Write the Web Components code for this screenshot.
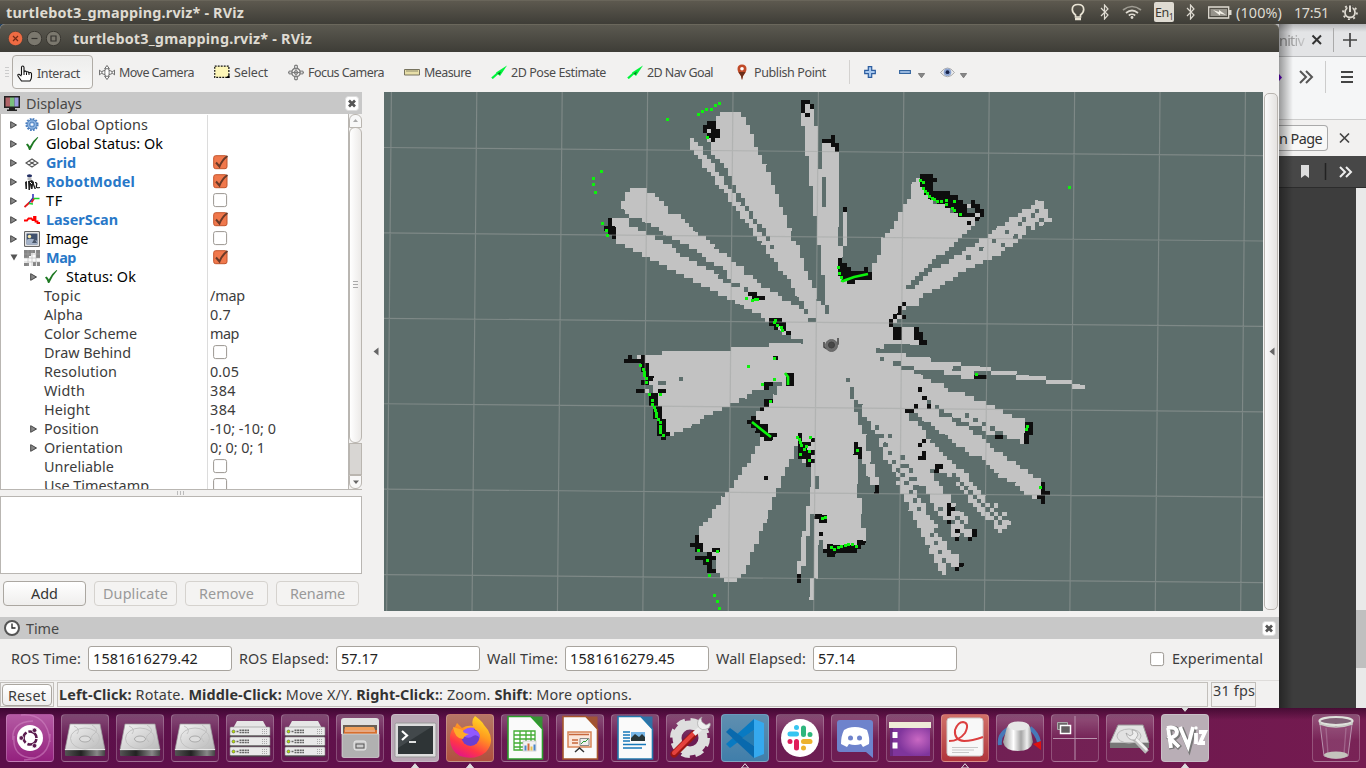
<!DOCTYPE html>
<html lang="en">
<head>
<meta charset="utf-8">
<title>turtlebot3_gmapping.rviz* - RViz</title>
<style>
html,body{margin:0;height:768px;overflow:hidden}
body{font:14.4px/19px "Noto Sans","Open Sans",sans-serif;color:#3c3c3c;background:#4a1140}
</style>
</head>
<body>
<desk-top></desk-top>
<script>
const svg=(w,h,body,vb)=>`<svg width="${w}" height="${h}" viewBox="${vb||`0 0 ${w} ${h}`}" style="display:block">${body}</svg>`;
const disk='<defs><linearGradient id="m" x2="1" y2="1"><stop stop-color="#f4f4f4"/><stop offset="1" stop-color="#b9b9b9"/></linearGradient><linearGradient id="k"><stop stop-color="#555"/><stop offset=".4" stop-color="#222"/><stop offset=".8" stop-color="#888"/><stop offset="1" stop-color="#444"/></linearGradient></defs><path d="M9 10h30l5 26H4z" fill="url(#m)" stroke="#999" stroke-width=".7"/><path d="M4 36h40v5q0 1-1 1H5q-1 0-1-1z" fill="url(#k)"/><path d="M4 35.6h40" stroke="#eee"/><ellipse cx="24" cy="24.5" rx="14.500" ry="10.500" fill="none" stroke="#c2c2c2"/><ellipse cx="24" cy="25" rx="5.500" ry="3" fill="#ddd" stroke="#aaa"/><path d="M13 12q7 3 3 8m15-9q8 5 2 9-5 3 0 8" fill="none" stroke="#bbb" stroke-width=".8"/>';
let server='<path d="M11 7h26l6 11H5z" fill="#e6e6e6"/>';
for(const y of [13,23,33])server+=`<rect x="4" y="${y}" width="40" height="9" rx="1" fill="#e9e9e9" stroke="#8b8b8b" stroke-width=".6"/><path d="M4 ${y+9}h40" stroke="#333" stroke-width="1.200"/><circle cx="7.500" cy="${y+4.500}" r="1.500" fill="#b5e000" stroke="#555" stroke-width=".6"/><path d="M10.500 ${y+4.500}h2M13.500 ${y+3.300}h9.500M13.500 ${y+5.500}h9.500" stroke="#666" stroke-width="1.400" stroke-dasharray="2 .6"/><path d="M36 ${y+2.500}h6M36 ${y+4.500}h6M36 ${y+6.500}h6" stroke="#aaa" stroke-dasharray="1 1"/>`;
const doc=(c,inner)=>`<path d="M7 2.500h23L41.500 15v30H7z" fill="#fafafa" stroke="${c}" stroke-width="1.600"/><path d="M29 2.500h12.500V15z" fill="${c}" opacity=".85"/>${inner}`;
let sheet='<rect x="13" y="17" width="21" height="19" fill="#fff"/><path d="M13 17h21v19H13zM13 21h21M13 25h21M13 29h21M13 33h21M19 17v19M25 17v19M30 17v19" fill="none" stroke="#44ad35" stroke-width="1.300"/><rect x="22" y="27" width="13" height="10" fill="#f1f1f1" stroke="#bbb" stroke-width=".6"/><path d="M24.500 36.500v-5" stroke="#4a86c8" stroke-width="2"/><path d="M27.500 36.500v-7" stroke="#d26b3a" stroke-width="2"/><path d="M30.500 36.500v-4" stroke="#e6c352" stroke-width="2"/><path d="M33.500 36.500v-6" stroke="#4a86c8" stroke-width="2"/>';
const check='<path d="M1 8.500l1.500-1q1.800 1.500 2.300 3Q7.500 4.500 12.500 1l.8.400Q8 7 5.300 14H4Q3 10.500 1 8.500z" fill="#1f7a24"/>';
const arrowg='<path d="M1 13.300L7 8" stroke="#00f53c" stroke-width="2.200"/><path d="M5 7.500L16 .5 9 11z" fill="#00f53c"/><path d="M6.500 8.500l3.500-2-1.500 3.500z" fill="#087a22"/>';
const bt='<path d="M2 4l7 7-3.500 4V1L9 5l-7 7" fill="none" stroke="#dfdbd2" stroke-width="1.200"/>';
const ICONS={
hand:svg(16,17,'<path d="M4.500 10V2.500q0-1.500 1.200-1.500T7 2.500V8 6.500q2-1 2.500.5 1.700-.8 2.300.7 2-.8 2.700 1V12q0 2-1.500 4H4.500Q3 14 1 11q-.6-2 1-1.700L4.500 11" fill="#fff" stroke="#111" stroke-width="1.100"/><path d="M7 8v2M9.500 7.500V10M12 8v2" stroke="#111"/>'),
move:svg(16,17,'<g fill="#fff" stroke="#555" stroke-width=".9"><ellipse cx="8.500" cy="8.500" rx="6" ry="2.300"/><ellipse cx="8.500" cy="8.500" rx="2.300" ry="6"/><path d="M8.500 1L6 4.500h5zM8.500 16L6 12.500h5zM.5 6v5l3-2.500zM16.500 6v5l-3-2.500z"/></g>','0 0 17 17'),
select:svg(16,14,'<path d="M.8.800h15v12h-15z" fill="#fdf6b8" stroke="#111" stroke-width="1.300" stroke-dasharray="2 1.200"/><path d="M16.500 9.500v4h-4z"/>','0 0 17 14'),
focus:svg(16,17,'<g fill="none" stroke="#777"><circle cx="8.500" cy="8.500" r="4.500" stroke-width="1.400"/><circle cx="8.500" cy="8.500" r="2"/><path d="M8.500 0v17M0 8.500h17"/><path d="M7 1h3v3H7zM7 13h3v3H7zM1 7h3v3H1zM13 7h3v3h-3z" fill="#ddd"/></g>','0 0 17 17'),
measure:svg(16,7,'<path d="M.5.500h15v5.500h-15z" fill="#e8dfa8" stroke="#77735e"/><path d="M3 1v2M5 1v2M7 1v2M9 1v2M11 1v2M13 1v2" stroke="#77735e" stroke-width=".8"/>'),
arrowg:svg(16,14,arrowg),
pin:svg(13,16,'<path d="M5 .5q4.500.2 4.500 4.500Q9.500 8 6 12l-1 4-1-4Q.5 8 .5 5 .5.700 5 .5z" fill="#c04a28"/><path d="M1.500 8h7L6 12 5 16 4 12z" fill="#6b2f1a"/><circle cx="5" cy="4.800" r="1.800" fill="#fff"/>'),
plus:svg(12,12,'<path d="M4.300.7h3.400v3.600h3.600v3.400H7.700v3.600H4.300V7.700H.7V4.300h3.600z" fill="#a8c8ee" stroke="#2c5d9f" stroke-width="1.200"/>'),
minus:svg(12,4,'<path d="M.6.600h10.800v2.800H.6z" fill="#b8d2f2" stroke="#34659f" stroke-width="1.100"/>'),
eye:svg(15,11,'<path d="M.5 5.500Q7.500-3.500 14.500 5.500 7.500 14 .5 5.500z" fill="#eee" stroke="#aaa"/><circle cx="7.500" cy="5.200" r="3.800" fill="#8ba3d0"/><circle cx="7.500" cy="5.200" r="1.900" fill="#18234a"/>'),
down:svg(7,5,'<path d="M.3.500h6.400L3.500 4.800z" fill="#888" stroke="#666" stroke-width=".7"/>'),
monitor:svg(16,17,'<path d="M0 1h16v12H0z" fill="#222"/><path d="M1.500 2.500h4.500v9H1.500z" fill="#b06468"/><path d="M6 2.500h4.500v9H6z" fill="#7abf7d"/><path d="M10.500 2.500h4v9h-4z" fill="#9a9ade"/><path d="M5 13h6v1.500h2V16H3v-1.500h2z" fill="#222"/>'),
clock:svg(16,16,'<circle cx="8" cy="8" r="7" fill="#fff" stroke="#555" stroke-width="2"/><path d="M8 3.500V8h3.500" fill="none" stroke="#222" stroke-width="1.300"/>'),
gear:svg(14,15,'<circle cx="7" cy="7.500" r="5.700" fill="none" stroke="#4a7fc0" stroke-width="1.800" stroke-dasharray="1.800 1.180"/><circle cx="7" cy="7.500" r="4.800" fill="#8cb4e2" stroke="#3f74b4" stroke-width=".8"/><circle cx="7" cy="7.500" r="2.400" fill="#a9c8ee" stroke="#3f74b4" stroke-width=".8"/><circle cx="7" cy="7.500" r="1" fill="#fff"/>'),
check:svg(14,15,check),
grid:svg(14,10,'<path d="M1 5l6-4 6 4-6 4zM4 3l6 4M10 3L4 7" fill="none" stroke="#555" stroke-width="1.200"/>'),
robot:svg(16,16,'<ellipse cx="5.500" cy="1.800" rx="2.600" ry="1.600" fill="#232f63"/><path d="M3.500 3.500h4v2.500h-4z" fill="#bbb"/><path d="M1 8l2-1v8H1.500zM4 7l4-1 2 2v2l2 5h-1.500L9 11l-.5 4H7L6.500 11 6 16H4.500z" fill="#222"/><path d="M6 8l2 2" stroke="#fff"/><path d="M11 8.500q2.500 0 1.500 3t3.500 2" fill="none" stroke="#111" stroke-width="1.200"/>'),
tf:svg(16,15,'<path d="M9 1v4l-4 5" stroke="#2a2ab8" fill="none" stroke-width="1.500"/><path d="M.5 14L5.500 9.500M7.500 9.500l2.500-4" stroke="#e31b1b" fill="none" stroke-width="1.800"/><path d="M9.500 5.500h6M5 10.500l4 .5" stroke="#19d42c" fill="none" stroke-width="1.500"/>'),
laser:svg(16,10,'<path d="M0 5.500h3l1.500-2h3l1 1.500h1.500V2h1.500v4.500h2V8H16" fill="none" stroke="#f00" stroke-width="1.800"/>'),
image:svg(16,16,'<path d="M.6.600h14.800v14.800H.6z" fill="#f4f4f4" stroke="#555"/><path d="M2.500 2.500h11v11h-11z" fill="#40516e"/><path d="M2.500 9q4-3 11 1v3.500h-11z" fill="#a3b2c8"/><circle cx="5.500" cy="5.500" r="1.700" fill="#f7e9aa"/><path d="M8 12l2.500-4.500L13 12z" fill="#4a5668"/>'),
map:svg(16,16,'<path d="M0 0h16v16H0z" fill="#fafafa"/><path d="M0 0h5v8H0zM5 0h6v3H5zM5 3h2v3H5zM12 0h4v8h-4zM0 13h5v3H0zM9 12h3v4H9zM13 12h3v4h-3z" fill="#858585"/><path d="M0 4h16M0 8h16M0 12h16M4 0v16M8 0v16M12 0v16" stroke="#aaa" stroke-width=".5"/>'),
bulb:svg(14,18,'<path d="M4.500 12Q1.300 9.500 1.300 6.500q0-5 5.700-5t5.700 5q0 3-3.200 5.500v2h-5z" fill="none" stroke="#e8e3d4" stroke-width="1.700"/><path d="M4 16h6" stroke="#e8e3d4" stroke-width="2.500"/>'),
bt:svg(11,16,bt),
wifi:svg(20,14,'<g fill="none" stroke="#dfdbd2" stroke-width="1.700"><path d="M1 5q9-7 18 0" opacity=".55"/><path d="M4 8q6-5 12 0"/><path d="M6.800 10.500q3.200-2.500 6.400 0"/></g><circle cx="10" cy="12.500" r="1.400" fill="#dfdbd2"/>'),
battery:svg(24,13,'<path d="M.7 1h20v11H.7z" fill="none" stroke="#dfdbd2" stroke-width="1.300"/><path d="M2.500 3h16.500v7H2.500z" fill="#96938b"/><path d="M21 4h2.500v5H21z" fill="#dfdbd2"/><path d="M5 4l6 2V4l7 5-6-1.500V9.500z" fill="#f2efe6"/>'),
power:svg(16,16,'<circle cx="8" cy="8.500" r="5" fill="none" stroke="#dfdbd2" stroke-width="1.800"/><circle cx="8" cy="8.500" r="6.900" fill="none" stroke="#dfdbd2" stroke-width="1.900" stroke-dasharray="2 3.420"/><path d="M8 0v8" stroke="#4e4b44" stroke-width="5"/><path d="M8 1.500v6.500" stroke="#dfdbd2" stroke-width="2"/>'),
/* launcher icons, 48 units square */
ubuntu:svg(48,48,'<g fill="none" stroke="#d58dc7" opacity=".5" stroke-width="1.500"><path d="M15 1Q42-1 44 28M44 20q0 25-26 26M8 22Q6 44 28 44M7 26Q5 8 27 7"/></g><circle cx="24" cy="24" r="13" fill="#fff"/><circle cx="24" cy="24" r="6.500" fill="none" stroke="#5b1a4e" stroke-width="2.600" stroke-dasharray="11.600 2" stroke-dashoffset="-1"/><g fill="#5b1a4e" stroke="#fff" stroke-width=".7"><circle cx="15.300" cy="24" r="2.300"/><circle cx="28.500" cy="16.300" r="2.300"/><circle cx="28.500" cy="31.700" r="2.300"/></g>'),
disk:svg(48,48,disk),server:svg(48,48,server),
files:svg(48,48,'<path d="M5 7q0-3 3-3h32q3 0 3 3v13H5z" fill="#e0e0e0"/><path d="M7 11h34v10H7z" fill="#6b6055"/><path d="M9 13h29l2 5H8z" fill="#f1a05b"/><path d="M8 16h33v4H8z" fill="#d66f2f"/><path d="M9 17h30" stroke="#fff" stroke-width=".8"/><path d="M6 20h37v22q0 1.500-2 1.500H8q-2 0-2-1.500z" fill="#b1b1b1" stroke="#ddd" stroke-width=".7"/><rect x="18" y="27" width="12" height="9" rx="2" fill="#ccc" stroke="#e8e8e8"/><rect x="20" y="30" width="8" height="4" fill="none" stroke="#555"/>'),
term:svg(48,48,'<rect x="4" y="9" width="41" height="34" rx="1.500" fill="#ddd" stroke="#999"/><path d="M7 12h35v28H7z" fill="#2e3436"/><path d="M7 12h35L7 34z" fill="#50575a" opacity=".6"/><path d="M11 17l5 4.500-5 4.500" fill="none" stroke="#fff" stroke-width="2.200"/><path d="M18 28h7" stroke="#fff" stroke-width="1.700"/>'),
firefox:svg(48,48,'<defs><linearGradient id="f" x1=".8" y1="0" x2=".3" y2="1"><stop stop-color="#ffe226"/><stop offset=".4" stop-color="#ff9a1f"/><stop offset=".75" stop-color="#ff3647"/><stop offset="1" stop-color="#e31587"/></linearGradient></defs><path d="M29 2q8 6 9 9l4 5q7 12-2 22-11 9-26 4Q3 36 4 22q1-7 5-9l2-4 5 5q5-3 11-2-2-6 2-10z" fill="url(#f)"/><circle cx="24.500" cy="23" r="9" fill="#6b3ed0"/><path d="M17 17q5-5 12-3-2 1-1 2 6 1 6 8-3-4-7-2-3 3-8 1 0-4-2-6z" fill="#9059ff"/><path d="M7 13l10 3q-1 3 6 4-5 2-6 5-8 0-10-12z" fill="#ffab28"/>'),
calc:svg(48,48,doc('#2c9e2c',sheet)),
impress:svg(48,48,doc('#a6562c','<path d="M12 18h23v15H12z" fill="#fbe6da" stroke="#d88558" stroke-width="1.500"/><path d="M13 20.500h20M16 26h6M16 29h6" stroke="#c8683c" stroke-width="1.500"/><path d="M24 24.500h9v7h-9z" fill="#eee" stroke="#888"/><path d="M25 30l3-3 1 1 3-3" stroke="#2d9a38" fill="none"/><path d="M19 38l4.500-4 4.500 4" fill="none" stroke="#333" stroke-width="1.500"/>')),
writer:svg(48,48,doc('#2379ad','<path d="M12 18h7M12 21h7M12 24h7M12 27h7M12 30.500h23M12 34h19" stroke="#1778b9" stroke-width="1.500"/><path d="M20 18h14v9H20z" fill="#77b7e8"/><path d="M20 27v-3l4-4 4 3 3-3 3 3v4z" fill="#283638"/>')),
tools:svg(48,48,'<circle cx="24" cy="24" r="17" fill="none" stroke="#ddd" stroke-width="6" stroke-dasharray="8 5.350"/><circle cx="24" cy="24" r="13" fill="none" stroke="#dedede" stroke-width="9"/><path d="M8 40L28 20" stroke="#9b1714" stroke-width="7" stroke-linecap="round"/><path d="M8 39L27 20" stroke="#e5423d" stroke-width="4" stroke-linecap="round"/><path d="M28 20l8-7" stroke="#eee" stroke-width="4.500"/><path d="M36 3q-6 3-4 9 3 6 11 2 2-3 1-5l-4 2-4-3-1-3z" fill="#eee" stroke="#aaa" stroke-width=".7"/>'),
code:svg(48,48,'<path d="M33 5l10 4v31l-10 4z" fill="#35a9ef"/><path d="M33 5L5 30l4 4 24-18z" fill="#087ac2"/><path d="M5 18l4-4 24 18v12z" fill="#0969ad"/><path d="M33 16v16L21 24z" fill="#287baf"/>'),
slack:svg(48,48,'<circle cx="24" cy="24" r="19" fill="#fff"/><g stroke-width="5" stroke-linecap="round"><path d="M20.500 13.500v0M14 20h6.500" stroke="#36c5f0"/><path d="M27.500 14v6.500M34 20.500v0" stroke="#2eb67d"/><path d="M27.500 34v0M27.500 27.500H34" stroke="#ecb22e"/><path d="M20.500 27.500V34M14 27.500v0" stroke="#e01e5a"/></g>'),
discord:svg(48,48,'<path d="M9 6h30q3 0 3 3v35l-7-6H9q-3 0-3-3V9q0-3 3-3z" fill="#6e83cc"/><path d="M17 14q7-2 14 0l5 2q3 8 2 14l-6 3-2-3q-6 2-12 0l-2 3-6-3q0-8 3-14z" fill="#fff"/><circle cx="19.500" cy="24" r="2.500" fill="#6e83cc"/><circle cx="28.500" cy="24" r="2.500" fill="#6e83cc"/>'),
desk:svg(48,48,'<defs><radialGradient id="d" cx=".7" cy=".5"><stop stop-color="#c968c3"/><stop offset="1" stop-color="#7f359c"/></radialGradient></defs><path d="M4 9h40v33H4z" fill="url(#d)"/><path d="M3 8h42v6H3z" fill="#eeecd8"/><path d="M4 14h3v28H4z" fill="#6b2a82"/><path d="M6.500 18h5v6h-5zM6.500 28.500h5v6h-5z" fill="#fff"/>'),
pdf:svg(48,48,'<rect x="6" y="4" width="36" height="38" rx="3" fill="#f8f8f8" stroke="#ccc"/><path d="M8 27q10 0 16-8 5-10-2-11-5 0-8 8-1 10 9 11 8 0 19-4" fill="none" stroke="#dc3f3f" stroke-width="2"/><path d="M11 33.500h26M11 36h22M11 38.500h17" stroke="#bbb" stroke-width=".8"/>'),
knob:svg(48,48,'<defs><linearGradient id="n"><stop stop-color="#999"/><stop offset=".35" stop-color="#fff"/><stop offset=".6" stop-color="#a5a5a5"/><stop offset=".8" stop-color="#eee"/><stop offset="1" stop-color="#888"/></linearGradient></defs><path d="M4 31q-2-12 12-18M34 14q7 5 9 14" fill="none" stroke="#4779b8" stroke-width="4"/><path d="M37 30l8-3v9z" fill="#d11"/><path d="M11 13Q14 8 23 8t11 5l3 15q-2 9-15 9T7 28z" fill="url(#n)"/><ellipse cx="22.500" cy="12" rx="10.500" ry="4.500" fill="#e6e6e6"/>'),
spaces:svg(48,48,'<path d="M24 2v44M2 24.500h44" stroke="#b993ae"/><path d="M6.500 8.500h10v7h-10z" fill="#6b6668" stroke="#aaa"/><path d="M9.500 11.500h10v8h-10z" fill="#635d60" stroke="#fff" stroke-width="1.500"/>'),
disktool:svg(48,48,'<path d="M12 11h25l6 18H4z" fill="#e2e2e2" stroke="#999"/><path d="M4 29h39v5H4z" fill="#777"/><ellipse cx="23" cy="22" rx="12" ry="7" fill="none" stroke="#bbb"/><path d="M27 23l14 15" stroke="#bbb" stroke-width="5"/><path d="M28 23l13 13" stroke="#f2f2f2" stroke-width="2.500"/><path d="M20 19q2 8 9 7l3-5q-1-5-6-5l1 4-3 2z" fill="#ededed" stroke="#999" stroke-width=".7"/>'),
rviz:svg(48,48,'<g fill="none" stroke="#777" stroke-width="5.500" transform="translate(1 1)"><path d="M7 14l3 20M7 14q9-2 9 4 0 4-7 6l9 9M19 13l8 19 5-19"/></g><g fill="none" stroke="#fff" stroke-width="3.800"><path d="M7 14l3 20M6 14q9-2 10 4 0 4-7 6l9 9M19 13l8 19 5-19M35 19v11M38 18h6l-5 11h5"/></g><circle cx="35" cy="14" r="1.700" fill="#fff"/>'),
trash:svg(48,48,'<path d="M8 10l4 32q12 5 24 0l4-32" fill="#a86f95" fill-opacity=".3" stroke="#b892ad"/><path d="M14 14l2 26M34 14l-2 26" stroke="#b98dab" stroke-width="1.300" opacity=".5"/><ellipse cx="24" cy="7" rx="16.500" ry="4" fill="#826378" stroke="#dfe2dc" stroke-width="2.200"/><path d="M8 8v2q16 6 32 0V8" fill="none" stroke="#c9ccc6" stroke-width="1.500"/><ellipse cx="24" cy="41" rx="12" ry="3.500" fill="#c4c4bd"/>')
};

const pendingFits=[];
function define(name,css,html,after){
  customElements.define(name,class extends HTMLElement{
    connectedCallback(){
      if(this.shadowRoot)return;
      const root=this.attachShadow({mode:'open'});
      const t=document.createElement('template');
      t.innerHTML=`<style>*{box-sizing:border-box}${css}</style>`+(typeof html==='function'?html(this):html);
      root.append(t.content.cloneNode(true));
      if(after)after(this,root);
    }
  });
}
const a=(e,n,d='')=>e.getAttribute(n)??d;

/* A label whose tracking is adjusted to fill the width in "w" */
define('fit-text',':host{display:inline-block;white-space:pre}span{display:inline-block}','<span><slot></slot></span>',(e,r)=>pendingFits.push([e,r.querySelector('span')]));
define('ui-icon',':host{display:block;flex:none}',e=>ICONS[a(e,'name')]);

define('top-panel',`:host{display:flex;align-items:center;height:24px;background:linear-gradient(#5d594f,#3e3d37);color:#dfdbd2;padding:0 8px 1px 6px;border-top:1px solid #69655a}
b{flex:1}.kb{width:20px;height:20px;background:#dfdbd2;color:#3b3934;border-radius:2px;font-size:12.5px;padding-left:1px;display:flex;align-items:center}.kb sub{font-size:8px;margin-top:8px}
ui-icon[name=bulb]{margin-right:14px}ui-icon[name=wifi]{margin:0 12px 0 12px}.kb+ui-icon{margin:0 12px 0 11px}.time{margin:0 13px 0 12px}.pc{margin-left:4px}`,
`<b><fit-text w="238">turtlebot3_gmapping.rviz* - RViz</fit-text></b><ui-icon name="bulb"></ui-icon><ui-icon name="bt"></ui-icon><ui-icon name="wifi"></ui-icon><div class="kb"><fit-text w="14">En</fit-text><sub>1</sub></div><ui-icon name="bt"></ui-icon><ui-icon name="battery"></ui-icon><fit-text class="pc" w="46">(100%)</fit-text><fit-text class="time" w="35">17:51</fit-text><ui-icon name="power"></ui-icon>`);

define('title-bar',`:host{display:flex;align-items:center;height:28px;background:linear-gradient(#5b5950,#3e3d37);border-top:1px solid #6a675c;color:#dfdbd2;padding-left:8px;border-radius:5px 5px 0 0}
i{width:15px;height:15px;margin-right:4px;display:block}b{margin-left:8px}`,
`<i>${svg(15,15,'<circle cx="7.500" cy="7.500" r="7.200" fill="#ef6b43" stroke="#423e37" stroke-width=".7"/><path d="M5 5l5 5M10 5l-5 5" stroke="#722b17" stroke-width="1.200"/>')}</i><i>${svg(15,15,'<circle cx="7.500" cy="7.500" r="7.200" fill="#7b786e" stroke="#393731"/><path d="M4.500 7.500h6" stroke="#35332f" stroke-width="1.200"/>')}</i><i>${svg(15,15,'<circle cx="7.500" cy="7.500" r="7.200" fill="#7b786e" stroke="#393731"/><path d="M5 5h5v5H5z" fill="none" stroke="#35332f" stroke-width="1.200"/>')}</i><b><fit-text w="239">turtlebot3_gmapping.rviz* - RViz</fit-text></b>`);

define('tool-item',':host{display:flex;align-items:center;gap:4px;font-size:12.5px;color:#4c4c4c;flex:none}:host([active]){background:linear-gradient(#ededec,#f8f8f7);border:1px solid #b0aca6;border-radius:4px;height:34px;width:81px;padding:3px 0 0 4px;margin-top:-1px}',
e=>`<ui-icon name="${a(e,'icon')}"></ui-icon><fit-text w="${a(e,'w')}">${a(e,'label')}</fit-text>`);
const tools=[['hand','Interact',43,0],['move','Move Camera',75,6],['select','Select',34,20],['focus','Focus Camera',76,20],['measure','Measure',47,20],['arrowg','2D Pose Estimate',95,20],['arrowg','2D Nav Goal',66,21],['pin','Publish Point',72,24]];
define('tool-bar',`:host{display:flex;align-items:center;height:40px;background:#f2f1f0;padding-left:5px}
.grip{width:4px;height:10px;margin-right:3px;background:repeating-linear-gradient(#ccc 0 1px,transparent 1px 3px)}.sep{width:1px;height:24px;background:#d4d2d0;margin:0 14px 0 23px}
ui-icon[name=minus]{margin:0 7px 0 23px}ui-icon[name=eye]{margin:0 5px 0 15px}ui-icon[name=down]{margin-top:6px}`,
`<div class="grip"></div>${tools.map((t,i)=>`<tool-item icon="${t[0]}" label="${t[1]}" w="${t[2]}" ${i?'':'active'} style="margin-left:${t[3]}px"></tool-item>`).join('')}<div class="sep"></div><ui-icon name="plus"></ui-icon><ui-icon name="minus"></ui-icon><ui-icon name="down"></ui-icon><ui-icon name="eye"></ui-icon><ui-icon name="down"></ui-icon>`);

define('dock-header',':host{display:flex;align-items:center;height:22px;background:#c8c8c8;padding:0 3px 0 4px;flex:none}span{flex:1;margin-left:6px;color:#484848;padding-top:1px}',
e=>`<ui-icon name="${a(e,'icon')}"></ui-icon><span><fit-text w="${a(e,'w')}">${a(e,'label')}</fit-text></span>${svg(14,15,'<rect x=".5" y=".5" width="13" height="14" rx="3" fill="#fff" stroke="#ddd"/><path d="M4 4.500l6 6M10 4.500l-6 6" stroke="#555" stroke-width="2.700"/>')}`);

define('check-box',':host{display:block;width:16px;height:16px}',
e=>e.hasAttribute('on')?svg(16,16,'<rect x=".7" y="1.700" width="13.300" height="13" rx="2" fill="#f0784c" stroke="#c2542c"/><path d="M3 8.500l3.500 4Q9 6 14.500 2" fill="none" stroke="#6b3a28" stroke-width="2"/>'):svg(16,16,'<rect x=".6" y="1.600" width="13" height="13" rx="2" fill="#fff" stroke="#9b9791"/>'));
define('tree-row',`:host{display:flex;height:19px;align-items:center;flex:none}
.n{width:206px;display:flex;align-items:center;flex:none;height:19px}.t{width:7px;margin-left:9px;flex:none}.i{width:16px;margin:0 6px 0 7px;display:flex;justify-content:center}
.v{border-left:1px solid #dcdcdc;height:19px;padding-left:2px;flex:1}:host([kind=link]) .n{color:#2878c8;font-weight:bold}:host([kind=black]){color:#000}check-box{margin:1px 0 0 3px}
:host([depth="1"]) .t{margin-left:29px}:host([depth="1"]) .i{margin-left:6px;margin-right:7px}:host([depth="1"]) .plain{margin-left:7px}`,
e=>{const op=a(e,'open');return `<div class="n"><div class="t">${op===''?'':op=='1'?svg(8,7,'<path d="M.5.500h7L4 6.500z" fill="#555"/>'):svg(7,8,'<path d="M.7.700v6.600L6.500 4z" fill="#888" stroke="#444"/>')}</div>${a(e,'icon')?`<div class="i"><ui-icon name="${a(e,'icon')}"></ui-icon></div>`:''}<fit-text class="${a(e,'icon')?'':'plain'}" w="${a(e,'w')}">${a(e,'label')}</fit-text></div><div class="v">${a(e,'val')=='on'?'<check-box on></check-box>':a(e,'val')=='off'?'<check-box></check-box>':`<fit-text w="${a(e,'vw')}">${a(e,'val')}</fit-text>`}</div>`});

const rows=[['Global Options','gear',102,0,'','',0,0],['Global Status: Ok','check',117,0,'black','',0,0],['Grid','grid',30,0,'link','on',0,0],['RobotModel','robot',89,0,'link','on',0,0],['TF','tf',17,0,'black','off',0,0],['LaserScan','laser',72,0,'link','on',0,0],['Image','image',42,0,'black','off',0,0],['Map','map',30,0,'link','on',0,1],['Status: Ok','check',70,1,'black','',0,0],
['Topic','',37,1,'','/map',35],['Alpha','',39,1,'','0.7',21],['Color Scheme','',93,1,'','map',29],['Draw Behind','',87,1,'','off'],['Resolution','',73,1,'','0.05',29],['Width','',41,1,'','384',26],['Height','',46,1,'','384',26],['Position','',55,1,'','-10; -10; 0',66,0],['Orientation','',79,1,'','0; 0; 0; 1',55,0],['Unreliable','',70,1,'','off'],['Use Timestamp','',105,1,'','off']];
define('displays-panel',`:host{display:flex;flex-direction:column;width:362px;flex:none}
.tree{height:376px;display:flex;border:1px solid #b9b6b2;border-top:0;border-right:0;background:#fff;flex:none}.rows{flex:1;overflow:hidden;display:flex;flex-direction:column;padding-top:1px}
.sb{width:14px;background:#f2f1f0;border-left:1px solid #b9b6b2;display:flex;flex-direction:column;align-items:center}.sb div{border:1px solid #bab6b0;width:13px}.up{height:14px;border-radius:6px 6px 0 0;background:#f8f8f8;display:flex;justify-content:center;align-items:center}.th{height:316px;border-radius:6px;background:linear-gradient(90deg,#fff,#eceae8);display:flex;align-items:center;justify-content:center;margin-top:-1px}.tr{flex:1;background:#d8d6d3}.dn{height:14px;border-radius:0 0 6px 6px;background:#f8f8f8;display:flex;align-items:center;justify-content:center}
.split{height:6px;display:flex;justify-content:center;align-items:center}.split i{width:8px;height:4px;background:repeating-linear-gradient(90deg,#bbb 0 1px,transparent 1px 3px)}
.desc{height:78px;border:1px solid #b9b6b2;background:#fff}.btns{display:flex;gap:8px;padding:7px 3px 0}.btns div{width:83px;height:25px;border:1px solid #d5d2ce;border-radius:4px;display:flex;justify-content:center;align-items:center;color:#999;background:#f4f3f2}.btns div:first-child{border-color:#aba7a1;color:#333;background:linear-gradient(#fff,#efeeed)}`,
`<dock-header icon="monitor" label="Displays" w="56"></dock-header><div class="tree"><div class="rows">${rows.map(r=>`<tree-row label="${r[0]}" icon="${r[1]}" w="${r[2]}" depth="${r[3]}" kind="${r[4]}" val="${r[5]}" vw="${r[6]||0}" open="${r[7]??''}"></tree-row>`).join('')}</div><div class="sb"><div class="up">${svg(5,4,'<path d="M0 3l2.500-3L5 3z" fill="#aaa"/>')}</div><div class="th">${svg(5,8,'<path d="M0 .5h5M0 3.500h5M0 6.500h5" stroke="#aaa"/>')}</div><div class="tr"></div><div class="dn">${svg(6,4,'<path d="M0 .5h6L3 4z" fill="#666"/>')}</div></div></div><div class="split"><i></i></div><div class="desc"></div><div class="btns"><div><fit-text w="27">Add</fit-text></div><div><fit-text w="65">Duplicate</fit-text></div><div><fit-text w="55">Remove</fit-text></div><div><fit-text w="55">Rename</fit-text></div></div>`);

/* Occupancy data. Each sector has an origin in view pixels; its outlines are in thirds of a pixel. */
const SECTORS=[
{x:580,y:92,free:[
'393,150 408,75 420,63 483,63 496,85 510,103 522,145 533,170 545,192 558,230 570,255 583,295 597,320 608,360 620,385 633,425 645,450 660,475 672,515 683,550 697,577 708,603 720,630 735,655 747,680 780,680 780,780 640,780 708,692 685,690 680,652 660,625 645,600 632,572 618,550 605,515 590,485 570,448 558,425 540,395 520,370 505,345 490,320 468,290 455,255 431,220 405,190 393,175',
'330,138 342,138 620,530 620,555 600,530 330,164',
'96,381 147,381 147,370 123,353 123,330 135,315 150,291 200,291 213,303 225,303 240,330 262,345 275,370 300,370 326,395 340,420 378,435 402,460 430,485 467,510 480,522 505,548 530,562 555,588 582,600 608,614 620,627 657,640 680,665 708,692 730,700 730,780 450,780 450,768 567,768 567,755 680,755 645,740 620,730 590,700 570,690 555,678 528,665 505,652 480,640 452,625 428,613 402,600 375,588 350,573 325,560 300,548 273,535 248,520 222,508 197,495 172,483 147,470 120,455 108,440',
'663,40 701,40 701,103 714,103 714,192 712,230 725,230 725,155 777,155 777,700 747,680 747,642 735,640 735,552 722,552 722,462 711,462 711,372 699,372 699,280 687,280 687,192 675,192 675,103 663,103'],
unknown:['147,375 185,380 190,393 212,393 237,415 262,432 288,445 315,455 340,470 365,485 390,508 415,520 440,535 442,560 465,570 480,585 465,588 440,575 415,548 390,535 366,522 340,508 312,497 288,472 262,458 250,443 210,433 185,418 147,393','725,258 738,258 738,348 725,348','685,680 708,680 708,692 685,692'],
occ:['381,87 406,87 406,113 419,113 419,139 406,139 406,152 393,152 393,139 381,139 381,126 369,126 369,100 381,100','84,381 96,381 96,405 108,405 108,443 96,443 96,430 84,430 84,418 72,418 72,405 84,405','504,600 530,600 530,613 555,613 555,627 516,627 516,613 504,613','567,678 606,678 606,692 618,692 618,717 579,717 579,704 567,704','663,27 690,27 690,40 701,40 701,53 687,53 687,40 675,40 675,66 663,66','726,143 752,143 752,130 765,130 765,155 777,155 777,180 765,180 765,168 752,168 752,155 726,155'],
dots:'681,72 624,724',light:'393,120 387,145 599,706',holes:'471,582 498,594'},
{x:820,y:92,free:['54,462 66,462 66,540 155,567 155,530 168,500 180,475 195,425 208,425 220,400 235,375 247,340 260,335 273,305 285,262 300,262 325,325 370,340 415,370 465,378 465,400 440,412 425,440 412,452 390,465 375,490 350,492 335,515 320,520 310,542 285,560 270,580 258,592 270,592 285,580 310,558 335,540 360,518 385,510 410,490 440,475 465,455 480,440 502,440 502,430 520,415 530,402 555,402 555,390 570,378 595,378 595,365 620,350 645,338 645,327 668,327 668,352 681,355 683,378 695,378 695,392 670,392 670,405 645,405 630,417 605,440 590,453 565,466 552,480 528,492 500,505 490,515 465,517 450,532 425,543 400,555 388,567 362,580 348,593 322,607 297,620 297,632 282,644 258,644 258,657 245,657 245,670 232,695 220,695 220,708 243,745 243,718 258,708 282,708 282,745 310,757 192,759 192,770 168,770 168,780 -20,780 -20,680 15,680 27,680 27,642 15,640 15,552 3,552','69,360 81,360 81,462 69,462'],unknown:[],
occ:['300,249 338,249 338,262 350,262 350,275 338,275 338,288 350,300 388,300 388,313 413,313 413,327 426,327 426,340 439,340 439,360 465,360 465,378 415,378 402,352 378,340 350,330 325,318 312,288 300,270','452,327 465,327 465,340 478,340 478,352 490,352 490,378 478,378 478,390 465,390 465,352 452,340','54,500 66,500 66,513 78,513 78,527 92,527 92,540 130,540 130,527 143,527 143,540 155,540 155,567 105,567 105,579 78,579 78,567 66,567 54,540','207,682 220,682 220,708 243,708 243,745 232,745 220,732 220,708 207,708','282,708 295,708 295,720 308,720 308,745 320,745 320,759 295,759 295,745 282,745'],
dots:'75,354 445,396 252,637 237,650 237,662 225,675 252,676',light:'445,345 471,370',holes:'264,585 650,360 638,372 612,384 598,397 663,384 650,398 623,410 560,423 586,435 522,448 547,462 483,474 444,498'},
{x:600,y:340,free:['95,45 135,45 186,48 186,33 390,36 390,24 507,24 507,12 620,12 620,0 720,0 720,625 669,625 669,588 654,588 654,550 642,530 642,380 630,380 600,355 590,318 580,318 580,358 567,358 567,383 554,383 554,408 540,408 540,447 528,447 528,472 516,472 516,510 501,510 501,548 489,548 489,575 477,575 477,612 462,612 462,638 450,638 450,677 438,677 436,702 422,702 422,714 411,714 411,725 372,725 372,713 360,713 360,702 347,700 347,650 325,640 297,620 297,562 310,560 310,548 323,548 323,535 337,535 337,510 350,510 350,497 362,497 362,471 375,471 375,458 388,458 388,446 400,446 400,421 414,421 414,408 427,408 427,381 438,381 452,367 452,345 465,330 478,318 478,305 490,290 450,243 465,235 465,215 490,215 505,195 518,190 518,165 530,153 530,140 515,140 490,152 455,153 440,176 415,178 415,188 390,188 390,202 362,202 362,215 340,215 340,228 312,228 312,240 300,240 300,252 275,252 275,264 248,264 248,278 222,278 222,290 210,290 197,280 197,250 185,240 185,205 173,195 173,165 150,130 146,70','630,408 642,408 642,497 630,497','618,497 630,497 630,588 618,588','603,575 615,575 615,678 603,678','591,665 603,665 603,705 591,705','642,563 654,563 654,717 642,717','627,717 639,717 639,780 627,780'],
unknown:['174,124 198,124 198,137 174,137','645,411 657,411 657,447 645,447'],
occ:['84,45 96,45 96,60 122,60 122,45 134,45 134,73 147,73 147,110 159,110 159,123 147,123 147,135 122,135 122,122 134,122 134,110 122,84 122,72 72,72 72,60 84,60','108,150 135,150 135,162 108,162','147,162 160,150 173,162 173,201 185,201 185,239 197,239 197,278 210,278 210,290 197,290 197,302 185,302 185,290 173,278 173,240 160,240 160,201 147,201','173,150 198,150 198,162 173,162','492,126 518,126 518,140 505,140 505,153 492,153','558,101 582,101 582,140 558,140','492,177 518,177 518,190 505,190 505,203 492,203','452,228 465,228 465,241 480,241 480,254 505,254 505,268 518,280 530,280 530,293 516,293 516,303 490,303 490,290 478,278 465,265 452,252 440,252 440,240 452,240','594,282 607,282 607,307 633,307 633,319 620,319 620,333 643,333 643,345 633,345 633,357 643,357 643,371 630,371 630,383 618,383 618,357 594,357','285,586 297,586 297,612 310,612 310,637 285,637 285,624 271,624 271,612 285,612','335,624 359,624 359,637 335,637','283,650 320,650 320,637 333,637 333,650 347,650 347,663 333,663 333,688 347,688 347,701 320,701 320,675 309,675 309,663 283,663','489,408 504,408 504,420 489,420','591,705 603,705 603,729 591,729','642,525 681,525 681,551 654,551 654,538 642,538'],
dots:'525,57 486,210 637,300 661,582',light:'140,156',holes:'243,117 525,133 537,133'},
{x:810,y:340,free:[
'0,0 222,15 222,27 195,38 285,42 285,54 363,54 363,67 453,70 453,81 543,81 543,95 490,95 490,119 453,119 453,105 402,105 402,93 273,80 273,92 312,92 312,105 338,105 350,118 363,118 363,130 400,132 400,143 438,156 465,158 465,170 490,172 490,184 528,184 528,196 552,198 552,210 580,210 580,223 605,223 617,236 642,236 642,311 630,311 630,300 600,298 580,275 550,285 525,275 515,260 490,262 478,248 450,240 435,230 410,220 400,208 385,207 385,220 400,233 425,233 425,246 450,260 475,262 475,273 500,285 525,300 525,312 552,325 552,337 577,338 577,350 603,363 630,378 640,390 665,403 667,415 692,417 692,470 680,480 667,480 667,468 655,466 642,455 617,440 617,428 590,425 577,412 565,402 550,388 525,375 515,350 490,350 475,338 450,325 437,312 425,300 400,285 385,275 372,262 350,247 335,232 310,222 298,220 298,232 310,245 335,260 348,272 348,298 362,300 372,312 385,325 400,338 412,350 412,362 438,375 438,388 450,390 475,400 475,412 500,440 512,452 512,465 538,478 550,490 563,490 563,505 577,515 590,528 600,543 600,555 577,570 577,582 565,580 565,568 540,555 525,540 525,528 512,515 500,505 487,492 475,480 462,465 450,450 437,437 425,415 410,400 372,398 372,412 385,425 398,440 398,453 412,465 425,465 425,478 437,490 437,515 462,515 475,530 475,555 487,565 487,595 462,595 460,575 440,590 425,595 425,575 410,555 400,540 385,525 372,490 360,478 347,453 347,440 322,440 310,425 298,405 283,380 258,370 232,330 207,295 195,270 168,245 144,243 156,270 168,295 168,320 180,332 180,372 193,375 193,408 206,412 206,437 180,437 180,410 168,400 168,372 156,358 141,358 141,475 153,475 153,563 165,563 165,605 40,625 0,500',
'206,290 232,290 258,370 283,425 295,450 308,480 320,500 333,525 345,545 358,580 370,605 383,630 396,655 408,680 408,707 396,707 383,680 370,655 358,625 345,600 333,575 320,550 308,525 295,500 283,475 270,445 258,425 245,395 232,372 220,345 206,315',
'258,370 310,400 345,470 372,540 398,590 422,625 447,645 447,682 420,680 398,650 385,610 350,560 322,490 283,425',
'543,95 618,95 618,107 543,107','618,107 708,107 708,121 618,121','708,121 783,121 783,134 708,134','783,134 822,134 822,147 783,147'],
unknown:['118,140 130,140 132,168 144,180 157,205 157,218 168,245 182,247 182,257 195,270 207,295 207,320 220,323 220,348 232,360 245,372 245,397 258,400 270,425 250,437 206,437 206,412 193,408 193,372 180,372 180,332 168,332 168,295 156,270 156,245 144,243 144,218 132,205 132,180 118,165','426,81 453,81 453,93 426,93','246,66 273,66 273,78 246,78','195,27 225,27 225,39 195,39','322,440 334,440 350,480 375,540 370,550 350,515 330,470'],
occ:['129,310 142,310 142,320 155,320 155,358 142,358 142,346 129,346','191,438 206,438 206,461 191,461','642,249 668,249 668,288 655,288 655,311 642,311','692,430 705,430 705,453 717,453 717,466 705,466 705,490 692,490 692,479 680,479 680,466 692,466','489,107 528,107 528,119 489,119','285,207 310,207 310,219 285,219','552,288 578,288 578,300 552,300','322,347 335,347 335,335 348,335 348,359 322,359','372,375 398,375 398,387 386,387 386,399 372,399','411,490 423,490 423,503 435,503 435,515 423,515 423,527 411,527','486,567 498,567 498,593 486,593','36,628 65,615 141,615 141,603 165,603 165,615 153,615 153,628 141,628 141,641 75,641 75,654 51,654 51,641 36,641','0,293 13,293 13,306 0,306','324,2 350,2 350,15 324,15'],
dots:'330,150 342,175 354,201 316,201 342,303 328,316 415,547 441,573 441,600 480,600 453,675 441,688 31,582',light:'',
holes:'216,60 112,123 354,188 380,201 471,228 495,241 519,254 545,267 558,280 572,280 201,264 212,290 240,290 225,315 237,340 276,354 252,366 289,380 263,392 302,392 315,418 276,405 302,418 289,431 315,444 302,457 328,470 366,392 430,405 443,418 430,418 455,430 443,444 468,444 481,457 455,457 468,470 494,470 507,483 532,483 519,497 545,497 532,510 558,510 545,523 570,523 558,536 584,536 545,549 570,549 353,497 340,484 353,470 366,510 353,523 378,523 391,510 366,535 391,535 378,549 404,549 391,563 416,563 404,576 378,576 391,588 430,549 443,536 455,549 468,562 416,590 430,600 416,612 403,600 430,637 416,625'}];
const points=(ox,oy,str)=>str.split(' ').map(p=>{const[x,y]=p.split(',');return[ox+x/3,oy+y/3]});
const LASER=[
...points(580,92,'262,81 417,33 405,40 395,52 380,53 367,59 356,68 381,136 65,239 40,259 40,278 47,301 67,394 78,415 81,431 500,620 518,626 525,622 532,623 587,684 583,692 592,700 604,707 608,714'),
...points(820,92,'747,285 301,264 309,271 310,289 316,299 322,305 328,313 337,318 344,323 353,327 365,327 378,326 380,338 402,327 397,349 404,355 421,366 56,525 59,543 64,555'),
...points(600,340,'121,77 129,87 132,97 132,107 140,115 138,126 149,163 182,163 156,181 158,192 162,201 165,210 168,220 168,230 176,238 180,247 180,258 182,268 182,278 189,286 522,56 444,80 522,118 488,133 511,183 591,292 598,299 602,306 604,316 619,319 612,328 628,334 600,344 628,360 632,292 295,632 351,635 321,661 327,706 344,766 352,784 358,806 667,535 675,532'),
...points(810,340,'499,104 651,258 648,268 691,443 142,331 64,621 74,628 85,621 95,618 105,615 115,613 126,612 138,618')];
define('map-view',':host{display:block;width:879px;height:519px;background:#5d6e6c;overflow:hidden;flex:none}svg{display:block}','<svg width="879" height="519" viewBox="384 92 879 519"></svg>',(e,root)=>{
  const S=4.27,TH=.0092,OX=816.3,OY=322.3,c=Math.cos(TH),s=Math.sin(TH);
  const toCell=(x,y)=>[((x-OX)*c+(y-OY)*s)/S,(-(x-OX)*s+(y-OY)*c)/S];
  const parse=(sec,str)=>str.split(' ').filter(Boolean).map(p=>{const[x,y]=p.split(',').map(Number);return toCell(sec.x+x/3,sec.y+y/3)});
  const cells=new Map();
  const fill=(pts,v)=>{const ys=pts.map(p=>p[1]);
    for(let j=Math.floor(Math.min(...ys));j<=Math.max(...ys);j++){const y=j+.5,xs=[];
      pts.forEach((p,k)=>{const q=pts[(k+1)%pts.length];if((p[1]<=y)!==(q[1]<=y))xs.push(p[0]+(y-p[1])*(q[0]-p[0])/(q[1]-p[1]))});
      xs.sort((m,n)=>m-n);
      for(let k=0;k+1<xs.length;k+=2)for(let i=Math.ceil(xs[k]-.5);i+.5<xs[k+1];i++)cells.set(i+','+j,v)}};
  const dot=(p,v)=>cells.set(Math.floor(p[0])+','+Math.floor(p[1]),v);
  for(const q of SECTORS)q.free.forEach(f=>fill(parse(q,f),1));
  for(const q of SECTORS){q.unknown.forEach(f=>fill(parse(q,f),0));parse(q,q.holes).forEach(p=>dot(p,0))}
  for(const q of SECTORS){q.occ.forEach(f=>fill(parse(q,f),2));parse(q,q.dots).forEach(p=>dot(p,2));parse(q,q.light).forEach(p=>dot(p,1))}
  const d=['','',''];
  for(const[k,v]of cells)if(v){const[i,j]=k.split(',');d[v]+=`M${i} ${j}h1v1h-1z`}
  const m=`matrix(${S*c} ${S*s} ${-S*s} ${S*c} ${OX} ${OY})`;
  let lines='';
  for(let k=-120;k<=120;k+=20)lines+=`M${k} -100V100M-130 ${k}H130`;
  const dots=LASER.map(p=>`<path d="M${Math.round(p[0]-1.500)} ${Math.round(p[1]-1.500)}h3v3h-3z"/>`).join('');
  root.querySelector('svg').innerHTML=`<g transform="${m}"><g shape-rendering="crispEdges"><path d="${d[1]}" fill="#c2c2c2"/><path d="${d[2]}" fill="#0e0e0e"/></g><path d="${lines}" stroke="#a0a4a2" stroke-opacity=".5" stroke-width=".28" fill="none"/></g><g fill="#0df20d" shape-rendering="crispEdges">${dots}</g><g fill="none" stroke="#0df20d" stroke-width="2.700"><path d="M841 280.500l2 .5 11-4 14-3M785 373l3 4v8M752 422l10 8 9 7"/></g><g stroke="#404040" stroke-width="1" fill="#666"><path d="M824 342v5l3 2M838 338v6l-3 2" fill="none" stroke-width="1.500"/><ellipse cx="831.500" cy="345.500" rx="6" ry="6" stroke="#666" fill="#6c6c6c"/><circle cx="831.500" cy="345" r="3" fill="#484848"/></g>`;
});

define('line-field',':host{display:flex;align-items:center;gap:7px;flex:none}div{width:144px;height:25px;border:1px solid #a8a49e;border-radius:3px;background:#fff;color:#222;padding:2px 0 0 4px}',
e=>`<fit-text w="${a(e,'lw')}">${a(e,'label')}</fit-text><div><fit-text w="${a(e,'vw')}">${a(e,'val')}</fit-text></div>`);
define('time-panel',`:host{display:block;height:63px}.f{display:flex;height:41px;align-items:center;padding:0 16px 2px 11px;gap:7px}.x{margin-left:auto;display:flex;gap:6px;align-items:center}`,
`<dock-header icon="clock" label="Time" w="33"></dock-header><div class="f"><line-field label="ROS Time:" lw="70" val="1581616279.42" vw="105"></line-field><line-field label="ROS Elapsed:" lw="90" val="57.17" vw="37"></line-field><line-field label="Wall Time:" lw="71" val="1581616279.45" vw="105"></line-field><line-field label="Wall Elapsed:" lw="90" val="57.14" vw="37"></line-field><div class="x"><check-box></check-box><fit-text w="91">Experimental</fit-text></div></div>`);
define('status-bar',`:host{display:flex;height:28px;border-top:1px solid #dedcda;padding:1px 0 2px;align-items:flex-start}
.r{border:1px solid #c2bfbb;width:54px;height:25px;padding:1px}.r div{border:1px solid #aaa69f;border-radius:4px;height:22px;background:linear-gradient(#fff,#eee);display:flex;justify-content:center;align-items:center}
.m{border:1px solid #c2bfbb;height:25px;margin-left:3px;width:1151px;padding:2px 0 0 1px}.m b{color:#333}.fps{border:1px solid #c2bfbb;margin-left:3px;width:45px;height:25px;padding-left:1px;line-height:16px}`,
`<div class="r"><div><fit-text w="38">Reset</fit-text></div></div><div class="m"><fit-text w="573"><b>Left-Click:</b> Rotate. <b>Middle-Click:</b> Move X/Y. <b>Right-Click:</b>: Zoom. <b>Shift</b>: More options.</fit-text></div><div class="fps"><fit-text w="42">31 fps</fit-text></div>`);

const tri=svg(6,9,'<path d="M5.500.500v8L.5 4.500z" fill="#666"/>');
define('rviz-window',`:host{display:flex;flex-direction:column;width:1279px;height:684px;background:#f2f1f0;flex:none;border-radius:5px 5px 0 0}
.mid{display:flex;height:525px;flex:none}.g{width:22px;height:519px;display:flex;align-items:center;padding-left:11px}.r{width:16px;height:519px;padding:1px 1px 1px 1px}.r div{height:517px;border:1px solid #b8b4af;border-radius:5px;background:linear-gradient(90deg,#fafafa,#e4e2e0);display:flex;align-items:center;padding-left:4px}`,
`<title-bar></title-bar><tool-bar></tool-bar><div class="mid"><displays-panel></displays-panel><div class="g">${tri}</div><map-view></map-view><div class="r"><div>${tri}</div></div></div><time-panel></time-panel><status-bar></status-bar>`);

define('browser-edge',`:host{display:flex;flex-direction:column;width:87px;height:684px;position:relative}
:host::after{content:"";position:absolute;left:0;top:0;width:14px;height:684px;background:linear-gradient(90deg,rgba(0,0,0,.38),transparent)}
.tab{height:33px;background:linear-gradient(#b5b6b8,#e3e4e6 8px);border-bottom:1px solid #b9babc;display:flex;align-items:center}.tab svg{flex:none}.tab fit-text{width:26px;color:#8b8b8b;-webkit-mask:linear-gradient(90deg,#000 30%,rgba(0,0,0,.3));mask:linear-gradient(90deg,#000 30%,rgba(0,0,0,.3))}
.nav{height:63px;background:#f5f6f7;border-bottom:1px solid #ccc;display:flex;padding:3px 0 0}
.page{height:36px;background:#f2f1f0;display:flex;align-items:center;color:#333}.page div{border:1px solid #aaa;border-left:0;border-radius:0 4px 4px 0;height:26px;width:49px;padding:3px 0 0 0;overflow:hidden;background:#f8f8f7}
.pdf{height:32px;background:#474747;display:flex;align-items:center;border-bottom:1px solid #2c2c2c}.body{flex:1;background:#3d3d3d;display:flex;justify-content:flex-end}.body div{width:10px;background:#e9e9e9;padding-top:422px}.body div i{display:block;height:58px;background:#bfbfbf}`,
`<div class="tab"><fit-text w="25">nitiv</fit-text>${svg(61,24,'<path d="M7.500 7.500l8.500 8.500M16 7.500l-8.500 8.500" stroke="#333" stroke-width="2"/><path d="M28.500 0v24" stroke="#aaa"/><path d="M45 5v14M38 12h14" stroke="#444" stroke-width="1.700"/>')}</div>
<div class="nav">${svg(87,40,'<path d="M0 14l3 3.500-3 3.500z" fill="#60c"/><path d="M21 11l6 6-6 6M27 11l6 6-6 6" fill="none" stroke="#555" stroke-width="2"/><path d="M46.500 1v32" stroke="#ccc"/><path d="M62 12h12M62 17h12M62 22h12" stroke="#444" stroke-width="1.800"/>')}</div>
<div class="page"><div><fit-text w="43">n Page</fit-text></div>${svg(32,20,'<path d="M12 5.500l9 9M21 5.500l-9 9" stroke="#444" stroke-width="1.700"/>')}</div>
<div class="pdf">${svg(87,30,'<path d="M22 8h8v13l-4-3-4 3z" fill="#ddd"/><path d="M46.500 6v17" stroke="#222" stroke-width="1.500"/><path d="M61 10l5 5-5 5M67 10l5 5-5 5" fill="none" stroke="#eee" stroke-width="2"/>')}</div><div class="body"><div><i></i></div></div>`);

define('dock-tile',`:host{display:block;width:48px;height:48px;border-radius:4px;border:1px solid rgba(255,255,255,.22);background:linear-gradient(rgba(255,255,255,.25),rgba(255,255,255,.04) 55%);flex:none;position:relative}
ui-icon{margin:-1px}b{position:absolute;left:19px;bottom:-7px}b+b{bottom:auto;top:-8px;transform:scaleY(-1)}`,
e=>{const m=a(e,'mark'),p=f=>`<b>${svg(8,5,`<path d="M.5 5L4 .7 7.500 5z" fill="${f}" stroke="#ddd"/>`)}</b>`;return `<ui-icon name="${a(e,'icon')}"></ui-icon>${m?p(m=='2'?'none':'#ddd'):''}${m=='3'?p('#ddd'):''}`});
const tiles=['ubuntu','disk','disk','disk','server','server','files','term','firefox','calc','impress','writer','tools','code','slack','discord','desk','pdf','knob','spaces','disktool','rviz','trash'];
const tint={ubuntu:'linear-gradient(#b45aa3,#94217e)',term:'#b9a7b5',firefox:'linear-gradient(#b57866,#b0503e)',code:'linear-gradient(#5f8fb0,#407eaa)',pdf:'linear-gradient(#d07068,#b0353b)',rviz:'#b9aeb6'};
const marks={term:1,firefox:1,code:2,pdf:2,rviz:3};
define('dock-bar',`:host{display:flex;height:60px;background:linear-gradient(rgba(35,0,30,.55),transparent 12px),linear-gradient(90deg,#5c0f4a,#65134c 50%,#741b50);padding:6px 6px 0;gap:7px}dock-tile[icon=trash]{margin-left:auto}`,
tiles.map(t=>`<dock-tile icon="${t}" mark="${marks[t]||''}" style="${tint[t]?'background:'+tint[t]:''}"></dock-tile>`).join(''));

define('desk-top',':host{display:flex;flex-direction:column;width:1366px;height:768px}.w{display:flex;height:684px;background:linear-gradient(90deg,#24415f 50%,#b8b9bb 50%) top/100% 10px no-repeat}','<top-panel></top-panel><div class="w"><rviz-window></rviz-window><browser-edge></browser-edge></div><dock-bar></dock-bar>');

for(const[host,span]of pendingFits){
  const w=+host.getAttribute('w'),n=host.textContent.length;
  if(w&&n)span.style.letterSpacing=(w-span.getBoundingClientRect().width)/n+'px';
}
</script>
</body>
</html>
